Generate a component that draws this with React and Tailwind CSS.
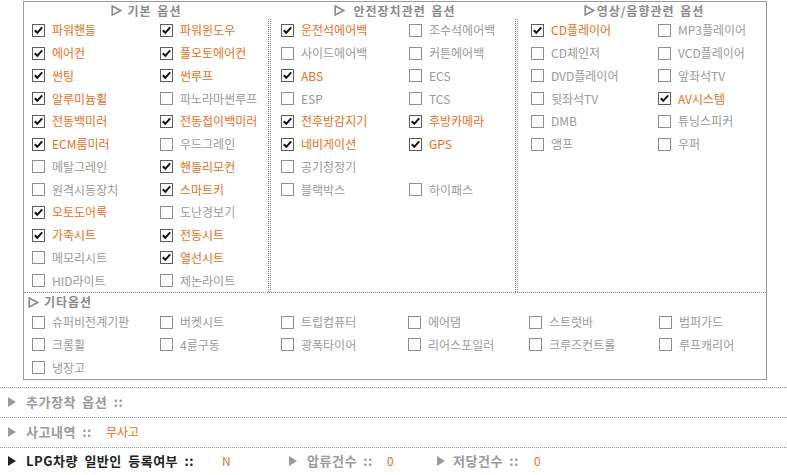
import React from "react";

const ORANGE = "text-[#e8701a]";
const GRAY = "text-[#9a9a9a]";

function Check({ on }) {
  return (
    <svg width="13" height="13" viewBox="0 0 13 13" className="shrink-0">
      <rect x="0.5" y="0.5" width="12" height="12" fill="#fff" stroke={on ? "#5c5c5c" : "#8e8e8e"} />
      {on && <path d="M2.8 6.2 L5.3 8.8 L10.2 3.4" fill="none" stroke="#111" strokeWidth="2" />}
    </svg>
  );
}

function Item({ label, on, w }) {
  return (
    <div className={`${w} flex items-center gap-[7px] shrink-0`}>
      {label ? <Check on={on} /> : null}
      {label ? <span className={`whitespace-nowrap ${on ? ORANGE : GRAY}`}>{label}</span> : null}
    </div>
  );
}

function OutlineTri() {
  return (
    <svg width="11" height="11" viewBox="0 0 11 11" className="shrink-0">
      <polygon points="1.2,1 9.8,5.5 1.2,10" fill="none" stroke="#8a8a8a" strokeWidth="1.6" strokeLinejoin="miter" />
    </svg>
  );
}

function SolidTri({ dark }) {
  return (
    <svg width="8" height="10" viewBox="0 0 8 10" className="shrink-0">
      <polygon points="0,0 8,5 0,10" fill={dark ? "#222" : "#9a9a9a"} />
    </svg>
  );
}

const basic = [
  [["파워핸들", 1], ["파워윈도우", 1]],
  [["에어컨", 1], ["풀오토에어컨", 1]],
  [["썬팅", 1], ["썬루프", 1]],
  [["알루미늄휠", 1], ["파노라마썬루프", 0]],
  [["전동백미러", 1], ["전동접이백미러", 1]],
  [["ECM룸미러", 1], ["우드그레인", 0]],
  [["메탈그레인", 0], ["핸들리모컨", 1]],
  [["원격시동장치", 0], ["스마트키", 1]],
  [["오토도어록", 1], ["도난경보기", 0]],
  [["가죽시트", 1], ["전동시트", 1]],
  [["메모리시트", 0], ["열선시트", 1]],
  [["HID라이트", 0], ["제논라이트", 0]],
];

const safety = [
  [["운전석에어백", 1], ["조수석에어백", 0]],
  [["사이드에어백", 0], ["커튼에어백", 0]],
  [["ABS", 1], ["ECS", 0]],
  [["ESP", 0], ["TCS", 0]],
  [["전후방감지기", 1], ["후방카메라", 1]],
  [["네비게이션", 1], ["GPS", 1]],
  [["공기청정기", 0], ["", 0]],
  [["블랙박스", 0], ["하이패스", 0]],
];

const av = [
  [["CD플레이어", 1], ["MP3플레이어", 0]],
  [["CD체인저", 0], ["VCD플레이어", 0]],
  [["DVD플레이어", 0], ["앞좌석TV", 0]],
  [["뒷좌석TV", 0], ["AV시스템", 1]],
  [["DMB", 0], ["튜닝스피커", 0]],
  [["앰프", 0], ["우퍼", 0]],
];

const etc = [
  ["슈퍼비전계기판", "버켓시트", "트립컴퓨터", "에어댐", "스트럿바", "범퍼가드"],
  ["크롬휠", "4륜구동", "광폭타이어", "리어스포일러", "크루즈컨트롤", "루프캐리어"],
  ["냉장고", "", "", "", "", ""],
];
const etcW = ["w-[128px]", "w-[121px]", "w-[127px]", "w-[121px]", "w-[130px]", "w-[100px]"];

function Rows({ data, w1 }) {
  return (
    <>
      {data.map((r, i) => (
        <div key={i} className="flex items-center h-[22.75px]">
          <Item label={r[0][0]} on={r[0][1]} w={w1} />
          <Item label={r[1][0]} on={r[1][1]} w="w-[100px]" />
        </div>
      ))}
    </>
  );
}

function Header({ children, gap }) {
  return (
    <div className={`flex items-center justify-center ${gap} font-bold tracking-[1px] [word-spacing:2px] text-[#8a8a8a]`}>
      <OutlineTri />
      <span className="whitespace-nowrap">{children}</span>
    </div>
  );
}

const LBL = "font-bold text-[13px] tracking-[0.5px] [word-spacing:3px] whitespace-nowrap";

export default function App() {
  return (
    <div className="w-[787px] h-[475px] bg-white overflow-hidden font-['Noto_Sans_CJK_KR',sans-serif] text-[12px] leading-[14px]">
      <div className="ml-[23px] mt-[1px] w-[744px] border border-[#9a9a9a]">
        {/* header */}
        <div className="flex h-[17px]">
          <div className="w-[244px] flex justify-center"><Header gap="gap-[6px]">기본 옵션</Header></div>
          <div className="w-[3px]" />
          <div className="w-[244px] flex justify-center pl-[4px]"><Header gap="gap-[8px]">안전장치관련 옵션</Header></div>
          <div className="w-[3px]" />
          <div className="w-[248px] flex justify-center pl-[4px]"><Header gap="gap-[2px]">영상/음향관련 옵션</Header></div>
        </div>
        {/* body */}
        <div className="flex h-[273px]">
          <div className="w-[244px] pl-[8px]">
            <Rows data={basic} w1="w-[128px]" />
          </div>
          <div className="w-[3px] border-x border-dotted border-[#888]" />
          <div className="w-[244px] pl-[10px]">
            <Rows data={safety} w1="w-[128px]" />
          </div>
          <div className="w-[3px] border-x border-dotted border-[#888]" />
          <div className="w-[248px] pl-[13px]">
            <Rows data={av} w1="w-[127px]" />
          </div>
        </div>
        {/* etc */}
        <div className="border-t border-dotted border-[#888]">
          <div className="h-[18px] flex items-center pl-[4px] gap-[5px] font-bold tracking-[1px] text-[#8a8a8a]">
            <OutlineTri />
            <span>기타옵션</span>
          </div>
          {etc.map((r, i) => (
            <div key={i} className="flex items-center h-[22.66px] pl-[8px]">
              {r.map((l, j) => (
                <Item key={j} label={l} on={0} w={etcW[j]} />
              ))}
            </div>
          ))}
        </div>
      </div>

      {/* bottom rows */}
      <div className="mt-[7px] border-t border-dotted border-[#999] h-[30px] flex items-center pl-[8px]">
        <SolidTri />
        <span className={`ml-[10px] ${LBL} text-[#9a9a9a]`}>추가장착 옵션 ::</span>
      </div>
      <div className="border-t border-dotted border-[#999] h-[30px] flex items-center pl-[8px]">
        <SolidTri />
        <span className={`ml-[10px] w-[80px] ${LBL} text-[#9a9a9a]`}>사고내역 ::</span>
        <span className={ORANGE}>무사고</span>
      </div>
      <div className="border-t border-dotted border-[#999] h-[28px] flex items-center pl-[8px]">
        <SolidTri dark />
        <span className={`ml-[10px] w-[196px] ${LBL} text-[#222]`}>LPG차량 일반인 등록여부 ::</span>
        <span className={`${ORANGE} w-[67px]`}>N</span>
        <SolidTri />
        <span className={`ml-[10px] w-[80px] ${LBL} text-[#9a9a9a]`}>압류건수 ::</span>
        <span className={`${ORANGE} w-[50px]`}>0</span>
        <SolidTri />
        <span className={`ml-[8px] w-[81px] ${LBL} text-[#9a9a9a]`}>저당건수 ::</span>
        <span className={ORANGE}>0</span>
      </div>
    </div>
  );
}
